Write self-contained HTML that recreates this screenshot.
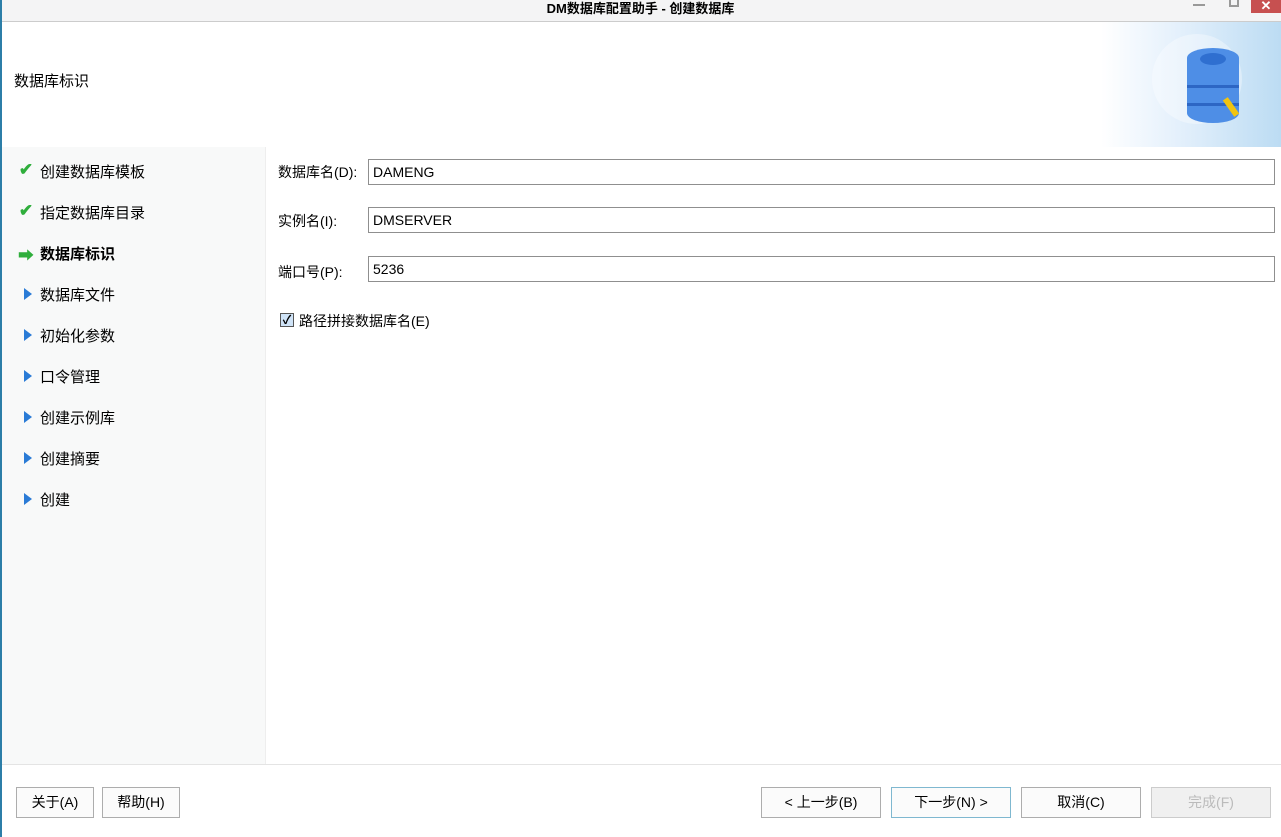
<!DOCTYPE html>
<html><head><meta charset="utf-8"><style>
*{margin:0;padding:0;box-sizing:border-box}
body{width:1281px;height:837px;overflow:hidden;background:#fff;font-family:"Liberation Sans","Noto Sans CJK SC",sans-serif;font-size:14px;color:#000;position:relative}
.abs{position:absolute}
.title{left:0;top:0;width:1281px;height:21px;background:#f4f4f5;text-align:center;font-weight:bold;font-size:13px;line-height:17px}
.lb{left:0;top:0;width:2px;height:837px;background:#2c7ea8}
.hdr{left:2px;top:21px;width:1279px;height:126px;background:#fff;border-top:1px solid #ccc}
.side{left:2px;top:147px;width:264px;height:617px;background:#f8f9f9;border-right:1px solid #eee}
.item{position:absolute;left:40px;font-size:15px}
.ic{position:absolute;left:18px;width:16px;text-align:center}
.tri{position:absolute;left:24px;width:0;height:0;border-top:6px solid transparent;border-bottom:6px solid transparent;border-left:8px solid #2a7bd6}
.lab{position:absolute;left:278px;font-size:14px}
.inp{position:absolute;left:368px;width:907px;height:26px;border:1px solid #8f8f8f;background:#fff;padding-left:4px;line-height:24px;font-size:14px}
.btn{position:absolute;top:787px;height:31px;border:1px solid #adadad;background:#fbfbfb;text-align:center;line-height:29px;font-size:14px}
</style></head><body>
<div class="abs title">DM数据库配置助手 - 创建数据库</div>
<div class="abs" style="left:1193px;top:4px;width:12px;height:2px;background:#999"></div>
<div class="abs" style="left:1229px;top:0;width:10px;height:7px;border:2px solid #999;border-top:none"></div>
<div class="abs" style="left:1251px;top:0;width:30px;height:13px;background:#c75050;color:#fff;text-align:center;font-size:13px;line-height:11px;font-weight:bold">✕</div>
<div class="abs hdr"><div style="position:absolute;right:0;top:0;width:180px;height:125px;background:linear-gradient(90deg,#fff,#e6f1fc 40%,#bcdcf3)"></div></div>
<div class="abs" style="left:14px;top:70px;font-size:15px">数据库标识</div>
<div class="abs" style="left:1152px;top:34px;width:90px;height:90px;border-radius:50%;background:rgba(255,255,255,.35)"></div>
<div class="abs" style="left:1187px;top:48px;width:52px;height:75px;border-radius:26px/10px;background:#4e8ee6"></div>
<div class="abs" style="left:1200px;top:53px;width:26px;height:12px;border-radius:50%;background:#2f6fd0"></div>
<div class="abs" style="left:1187px;top:85px;width:52px;height:3px;background:#2d66c4"></div>
<div class="abs" style="left:1187px;top:103px;width:52px;height:3px;background:#2d66c4"></div>
<div class="abs" style="left:1228px;top:97px;width:6px;height:20px;background:#f1c40f;transform:rotate(-35deg)"></div>
<div class="abs lb"></div>
<div class="abs side"></div>
<div class="ic abs" style="top:160px;color:#2fae3c;font-size:17px;font-weight:bold">✔</div>
<div class="item abs" style="top:161px">创建数据库模板</div>
<div class="ic abs" style="top:201px;color:#2fae3c;font-size:17px;font-weight:bold">✔</div>
<div class="item abs" style="top:202px">指定数据库目录</div>
<div class="ic abs" style="top:242px;color:#2fae3c;font-size:16px;font-weight:bold">➡</div>
<div class="item abs" style="top:243px;font-weight:bold">数据库标识</div>
<div class="tri" style="top:288px"></div><div class="item abs" style="top:284px">数据库文件</div>
<div class="tri" style="top:329px"></div><div class="item abs" style="top:325px">初始化参数</div>
<div class="tri" style="top:370px"></div><div class="item abs" style="top:366px">口令管理</div>
<div class="tri" style="top:411px"></div><div class="item abs" style="top:407px">创建示例库</div>
<div class="tri" style="top:452px"></div><div class="item abs" style="top:448px">创建摘要</div>
<div class="tri" style="top:493px"></div><div class="item abs" style="top:489px">创建</div>
<div class="lab" style="top:162px">数据库名(D):</div><div class="inp" style="top:159px">DAMENG</div>
<div class="lab" style="top:211px">实例名(I):</div><div class="inp" style="top:207px">DMSERVER</div>
<div class="lab" style="top:262px">端口号(P):</div><div class="inp" style="top:256px">5236</div>
<div class="abs" style="left:280px;top:313px;width:14px;height:14px;border:1px solid #555;background:#cfe3f7;font-size:12px;line-height:12px;text-align:center;font-weight:bold">✓</div>
<div class="lab" style="left:299px;top:311px">路径拼接数据库名(E)</div>
<div class="abs" style="left:2px;top:764px;width:1279px;height:1px;background:#e4e4e4"></div>
<div class="btn" style="left:16px;width:78px">关于(A)</div>
<div class="btn" style="left:102px;width:78px">帮助(H)</div>
<div class="btn" style="left:761px;width:120px">&lt; 上一步(B)</div>
<div class="btn" style="left:891px;width:120px;border-color:#7fb8d0">下一步(N) &gt;</div>
<div class="btn" style="left:1021px;width:120px">取消(C)</div>
<div class="btn" style="left:1151px;width:120px;background:#f0f0f0;border-color:#ccc;color:#bbb">完成(F)</div>
</body></html>
